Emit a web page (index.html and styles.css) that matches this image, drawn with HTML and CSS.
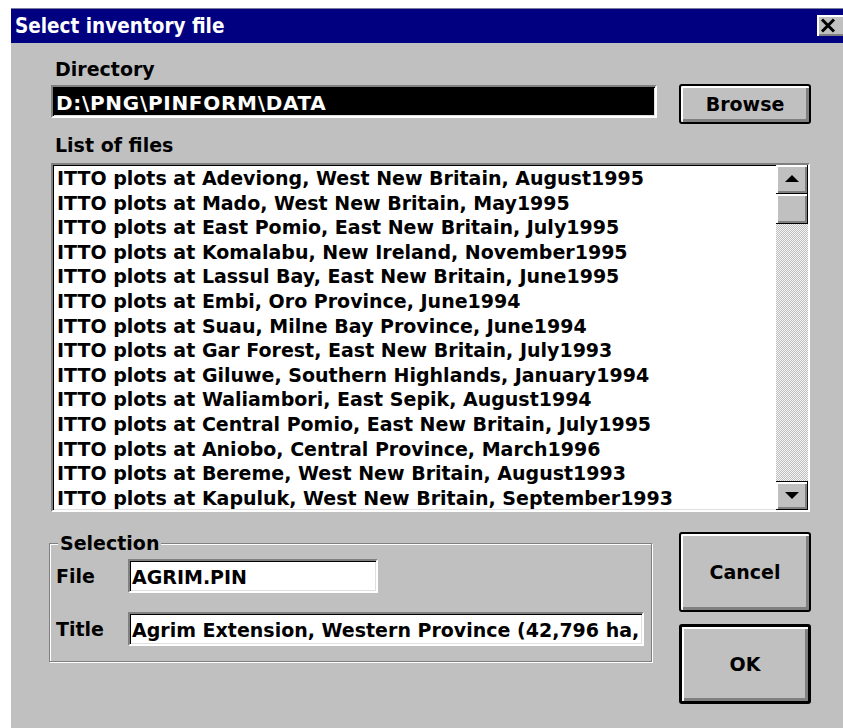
FILE: index.html
```html
<!DOCTYPE html>
<html>
<head>
<meta charset="utf-8">
<title>Select inventory file</title>
<link rel="stylesheet" href="styles.css">
</head>
<body>
<div class="dialog">
  <div class="titlebar">
    <span class="caption">Select inventory file</span>
    <button class="close" aria-label="Close">
      <svg width="16" height="15" viewBox="0 0 16 15"><path d="M2 1.5 L14 13.5 M14 1.5 L2 13.5" stroke="#000" stroke-width="3" fill="none"/></svg>
    </button>
  </div>
  <div class="client">
    <div class="label">Directory</div>
    <div class="dir-row">
      <div class="sunken dir-field">D:\PNG\PINFORM\DATA</div>
      <button class="btn browse">Browse</button>
    </div>
    <div class="label list-label">List of files</div>
    <div class="sunken listbox">
      <ul class="items">
        <li>ITTO plots at Adeviong, West New Britain, August1995</li>
        <li>ITTO plots at Mado, West New Britain, May1995</li>
        <li>ITTO plots at East Pomio, East New Britain, July1995</li>
        <li>ITTO plots at Komalabu, New Ireland, November1995</li>
        <li>ITTO plots at Lassul Bay, East New Britain, June1995</li>
        <li>ITTO plots at Embi, Oro Province, June1994</li>
        <li>ITTO plots at Suau, Milne Bay Province, June1994</li>
        <li>ITTO plots at Gar Forest, East New Britain, July1993</li>
        <li>ITTO plots at Giluwe, Southern Highlands, January1994</li>
        <li>ITTO plots at Waliambori, East Sepik, August1994</li>
        <li>ITTO plots at Central Pomio, East New Britain, July1995</li>
        <li>ITTO plots at Aniobo, Central Province, March1996</li>
        <li>ITTO plots at Bereme, West New Britain, August1993</li>
        <li>ITTO plots at Kapuluk, West New Britain, September1993</li>
      </ul>
      <div class="vscroll">
        <div class="sb-btn"><span class="tri tri-up"></span></div>
        <div class="sb-btn sb-thumb"></div>
        <div class="sb-track"></div>
        <div class="sb-btn sb-down"><span class="tri tri-down"></span></div>
      </div>
    </div>
    <div class="bottom">
      <fieldset class="selection">
        <legend>Selection</legend>
        <div class="sel-row">
          <span class="sel-label">File</span>
          <div class="sunken input file-input">AGRIM.PIN</div>
        </div>
        <div class="sel-row second">
          <span class="sel-label">Title</span>
          <div class="sunken input title-input">Agrim Extension, Western Province (42,796 ha,</div>
        </div>
      </fieldset>
      <div class="actions">
        <button class="btn big">Cancel</button>
        <button class="btn big default">OK</button>
      </div>
    </div>
  </div>
</div>
</body>
</html>
```

FILE: styles.css
```css
html, body {
  margin: 0;
  height: 100%;
}

body {
  background: #fff;
  overflow: hidden;
  font-family: "DejaVu Sans", "Liberation Sans", sans-serif;
  font-weight: bold;
  font-size: 19px;
  line-height: 22px;
  color: #000;
}

/* window frame */
.dialog {
  margin: 8px 0 0 11px;
  width: 836px;
  height: 720px;
  background: #c0c0c0;
  display: flex;
  flex-direction: column;
}

.titlebar {
  height: 35px;
  flex: none;
  background: #000080;
  display: flex;
  align-items: center;
  justify-content: space-between;
  padding-left: 4px;
  border-top: 1px solid #7a7a9a;
  box-sizing: border-box;
}

.caption {
  color: #fff;
  font-family: "DejaVu Sans Condensed", "DejaVu Sans", sans-serif;
  font-size: 20.5px;
  line-height: 24px;
}

.close {
  width: 30px;
  height: 21px;
  padding: 0 0 0 3px;
  margin-top: -2px;
  border: none;
  background: #c0c0c0;
  box-shadow: inset 2px 2px 0 #fff, inset -2px -2px 0 #808080;
  display: flex;
  align-items: center;
  justify-content: flex-start;
}

.close svg {
  display: block;
}

/* dialog body */
.client {
  padding: 15px 36px 0 40px;
}

.label {
  padding-left: 4px;
}

.sunken {
  box-sizing: border-box;
  border: 2px solid;
  border-color: #808080 #fff #fff #808080;
  box-shadow: inset 1px 1px 0 #000, inset -1px -1px 0 #dfdfdf;
}

.dir-row {
  display: flex;
  align-items: flex-start;
  margin-top: 4px;
}

.dir-field {
  width: 606px;
  height: 33px;
  margin-top: 1px;
  padding: 5px 3px 0;
  background: #000;
  color: #fff;
  font-size: 20px;
  letter-spacing: 0.7px;
  white-space: nowrap;
}

.btn {
  font: inherit;
  color: #000;
  background: #c0c0c0;
  border: 2px solid #000;
  border-radius: 3px;
  box-shadow: inset 2px 2px 0 #fff, inset -3px -3px 0 #808080;
  padding: 0;
  box-sizing: border-box;
}

.browse {
  margin-left: 22px;
  width: 132px;
  height: 40px;
}

.list-label {
  margin-top: 10px;
}

/* file list with its scroll bar */
.listbox {
  margin-top: 7px;
  width: 759px;
  height: 349px;
  display: flex;
  background: #fff;
}

.items {
  flex: 1;
  margin: 0;
  padding: 1px 0 0 4px;
  list-style: none;
  line-height: 24.6px;
  white-space: nowrap;
  overflow: hidden;
}

.vscroll {
  width: 32px;
  flex: none;
  display: flex;
  flex-direction: column;
}

.sb-btn {
  height: 29px;
  flex: none;
  box-sizing: border-box;
  background: #c0c0c0;
  border-right: 1px solid #000;
  border-bottom: 1px solid #000;
  box-shadow: inset 2px 2px 0 #fff, inset -2px -2px 0 #808080;
  display: flex;
  align-items: center;
  justify-content: center;
}

.sb-thumb {
  height: 30px;
}

.sb-down {
  height: 29px;
  border-top: 1px solid #000;
}

.sb-track {
  flex: 1;
  background: repeating-conic-gradient(#c0c0c0 0 25%, #f4f4f4 0 50%) 0 0 / 2px 2px;
}

.tri {
  width: 0;
  height: 0;
  border-left: 7px solid transparent;
  border-right: 7px solid transparent;
}

.tri-up {
  border-bottom: 7px solid #000;
  margin-top: -2px;
}

.tri-down {
  border-top: 7px solid #000;
}

/* selection group and action buttons */
.bottom {
  display: flex;
  align-items: flex-start;
  margin-top: 20px;
}

.selection {
  margin: 0 0 0 -2px;
  width: 603px;
  box-sizing: border-box;
  min-width: 0;
  padding: 0 6px 15px;
  border: 1px solid #808080;
  box-shadow: 1px 1px 0 #fff, inset 1px 1px 0 #fff;
}

.selection legend {
  margin-left: 2px;
  padding: 0 2px;
  background: #c0c0c0;
}

.sel-row {
  display: flex;
  align-items: center;
  margin-top: 5px;
}

.sel-row.second {
  margin-top: 19px;
}

.sel-label {
  width: 72px;
  flex: none;
}

.input {
  height: 34px;
  padding: 5px 2px 0;
  background: #fff;
  white-space: nowrap;
  overflow: hidden;
}

.file-input {
  width: 250px;
}

.title-input {
  width: 516px;
}

.actions {
  margin-left: 27px;
  display: flex;
  flex-direction: column;
  gap: 12px;
}

.big {
  width: 132px;
  height: 80px;
}

.default {
  border-width: 3px;
}
```
